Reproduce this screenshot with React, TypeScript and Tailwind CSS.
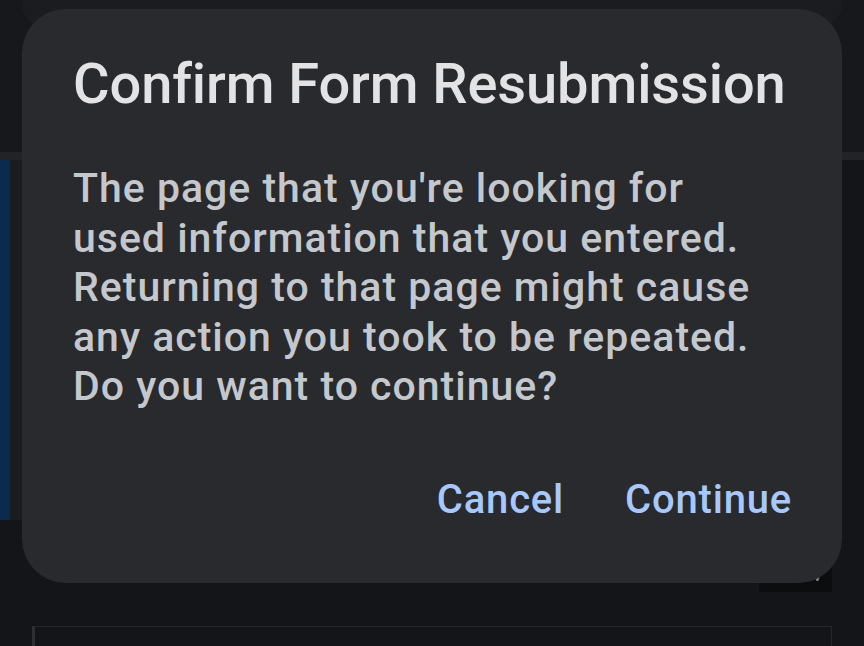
import React from "react";

export default function App() {
  return (
    <div
      className="relative w-[864px] h-[646px] overflow-hidden bg-[#141519]"
      style={{ fontFamily: "Roboto, 'Noto Sans', sans-serif" }}
    >
      {/* background page */}
      <div className="h-[152px] bg-[#17181c] px-[22px]">
        <div className="h-[28px] rounded-b-[24px] bg-[#1b1c20]" />
      </div>
      <div className="h-[8px] bg-[#222327]" />
      <div className="flex h-[360px]">
        <div className="w-[10px] bg-[#0c2a4e]" />
        <div className="w-[12px] bg-[#1b1c20]" />
        <div className="flex-1" />
      </div>
      <div className="flex items-start justify-between pl-[38px] pr-[32px] pt-[35px]">
        <span className="mt-[-6px] text-[29px] font-light leading-[37px] text-[#8a8d91]">
          Text formatting
        </span>
        <div className="flex h-[37px] w-[73px] items-center justify-end bg-[#0c0d0f] pr-[10px] text-[22px] text-[#8a8d91]">
          View
        </div>
      </div>
      <div className="mx-[32px] mt-[34px] h-[40px] border border-[#25272b] border-l-[3px] border-l-[#2c3035]" />

      {/* dialog */}
      <div className="absolute left-[22px] top-[9px] flex h-[574px] w-[820px] flex-col rounded-[44px] bg-[#282a2e] pl-[51px] pr-[50px] pt-[47px]">
        <h1 className="text-[56px] font-medium leading-[56px] text-[#e3e3e6] whitespace-nowrap tracking-[-0.1px]">
          Confirm Form Resubmission
        </h1>
        <div className="mt-[52px] text-[41px] font-medium leading-[49.5px] tracking-[1px] text-[#c4c7cc] whitespace-nowrap">
          <div>The page that you're looking for</div>
          <div>used information that you entered.</div>
          <div>Returning to that page might cause</div>
          <div>any action you took to be repeated.</div>
          <div>Do you want to continue?</div>
        </div>
        <div className="mt-[64px] flex justify-end gap-[61px] text-[40px] font-medium leading-[48px] tracking-[0.8px] text-[#a8c7fa]">
          <span>Cancel</span>
          <span>Continue</span>
        </div>
      </div>
    </div>
  );
}
